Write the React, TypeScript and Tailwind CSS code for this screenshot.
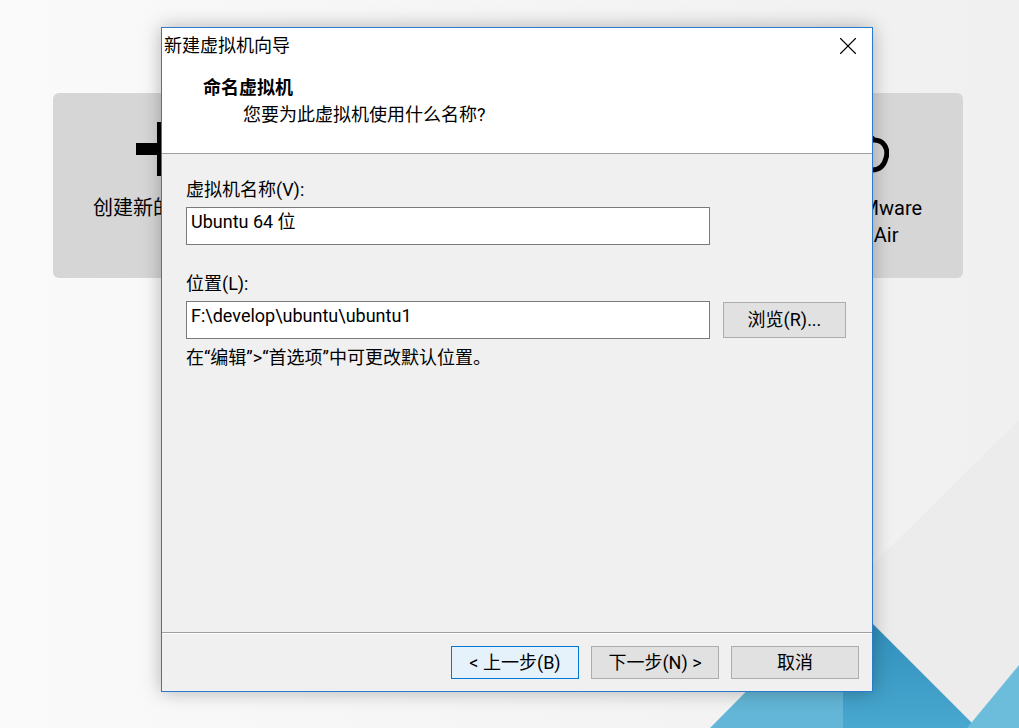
import { X } from 'lucide-react';

const ui = { fontFamily: 'Roboto, "Noto Sans CJK SC", sans-serif' };

// 首页上的大按钮（被对话框遮住大半）
function HomeCard({ icon, lines }: { icon: React.ReactNode; lines: string[] }) {
  return (
    <div className="w-[220px] h-[185px] rounded-[6px] bg-[#d6d6d6] flex flex-col items-center pt-[29px]">
      <div className="w-[72px] h-[54px] flex items-center justify-center">{icon}</div>
      <div className="mt-[19px] text-[20px] leading-[27px] text-black text-center">
        {lines.map((l) => (
          <div key={l}>{l}</div>
        ))}
      </div>
    </div>
  );
}

function PlusIcon() {
  return (
    <svg width="54" height="54" viewBox="0 0 54 54">
      <rect x="21" y="0" width="12" height="54" fill="#000" />
      <rect x="0" y="21" width="54" height="12" fill="#000" />
    </svg>
  );
}

function CloudIcon() {
  return (
    <svg width="72" height="54" viewBox="0 0 72 54" fill="none" stroke="#000" strokeWidth="5">
      <path d="M14 48 C5 48 3 38 8 33 C6 24 15 18 22 21 C25 10 40 8 46 17 C51 14 55 15 57 18 C66 18 72 26 69 36 C67 44 62 48 55 48 Z" />
    </svg>
  );
}

function WinButton({ children, primary }: { children: React.ReactNode; primary?: boolean }) {
  return (
    <button
      className={`w-[128px] h-[33px] text-[18px] leading-none text-black border ${
        primary ? 'border-[#0078d7] bg-[#e5f1fb]' : 'border-[#adadad] bg-[#e1e1e1]'
      }`}
    >
      {children}
    </button>
  );
}

export default function App() {
  return (
    <div
      className="relative w-[1019px] h-[728px] overflow-hidden bg-gradient-to-r from-[#fafafa] to-[#f0f0f0]"
      style={ui}
    >
      {/* 桌面背景的蓝色三角 */}
      <svg className="absolute inset-0" width="1019" height="728" viewBox="0 0 1019 728">
        <defs>
          <linearGradient id="b1" x1="0" y1="0" x2="0" y2="1">
            <stop offset="0" stopColor="#2a88b6" />
            <stop offset="1" stopColor="#49a8cf" />
          </linearGradient>
        </defs>
        <polygon points="843,594 1019,420 1019,665 977,728" fill="#ececec" />
        <polygon points="843,594 710,728 843,728" fill="#63b6d7" />
        <polygon points="843,594 843,728 977,728" fill="url(#b1)" />
        <polygon points="967,728 1019,665 1019,728" fill="#6cbddc" />
      </svg>

      {/* 首页卡片 */}
      <div className="relative flex gap-[10px] pl-[53px] pt-[93px]">
        <HomeCard icon={<PlusIcon />} lines={['创建新的虚拟机']} />
        <HomeCard icon={<div />} lines={['打开虚拟机']} />
        <HomeCard icon={<div />} lines={['连接远程服务器']} />
        <HomeCard icon={<CloudIcon />} lines={['连接到 VMware', 'vCloud Air']} />
      </div>

      {/* 新建虚拟机向导 对话框 */}
      <div className="absolute left-[161px] top-[27px] w-[712px] h-[665px] border border-[#2b7bcb] bg-white flex flex-col shadow-[0_0_18px_rgba(0,0,0,0.28)]">
        <div className="h-[125px] bg-white">
          <div className="h-[36px] flex items-center justify-between pl-[2px] pr-[9px]">
            <span className="text-[18px] leading-[24px] text-black">新建虚拟机向导</span>
            <X size={30} strokeWidth={0.9} className="text-black" />
          </div>
          <div className="mt-[12px] pl-[41px] text-[18px] leading-[24px] font-bold text-black">命名虚拟机</div>
          <div className="mt-[3px] pl-[81px] text-[18px] leading-[24px] text-black">您要为此虚拟机使用什么名称?</div>
        </div>
        <div className="h-px bg-[#a0a0a0]" />

        <div className="flex-1 bg-[#f0f0f0] px-[24px] pt-[24px] text-[18px] leading-[24px] text-black">
          <div>虚拟机名称(V):</div>
          <div className="mt-[5px] w-[524px] h-[38px] border border-[#7a7a7a] bg-white pl-[4px] pt-[2px]">
            Ubuntu 64 位
          </div>

          <div className="mt-[27px]">位置(L):</div>
          <div className="mt-[5px] flex items-start">
            <div className="w-[524px] h-[38px] border border-[#7a7a7a] bg-white pl-[4px] pt-[2px]">
              F:\develop\ubuntu\ubuntu1
            </div>
            <button className="ml-[13px] mt-px w-[123px] h-[36px] border border-[#adadad] bg-[#e1e1e1] text-[18px]">
              浏览(R)...
            </button>
          </div>
          <div className="mt-[7px]">在“编辑”&gt;“首选项”中可更改默认位置。</div>
        </div>

        <div className="h-px bg-[#a0a0a0]" />
        <div className="h-px bg-white" />
        <div className="h-[57px] bg-[#f0f0f0] flex justify-end gap-[12px] pt-[12px] pr-[13px]">
          <WinButton primary>&lt; 上一步(B)</WinButton>
          <WinButton>下一步(N) &gt;</WinButton>
          <WinButton>取消</WinButton>
        </div>
      </div>
    </div>
  );
}
